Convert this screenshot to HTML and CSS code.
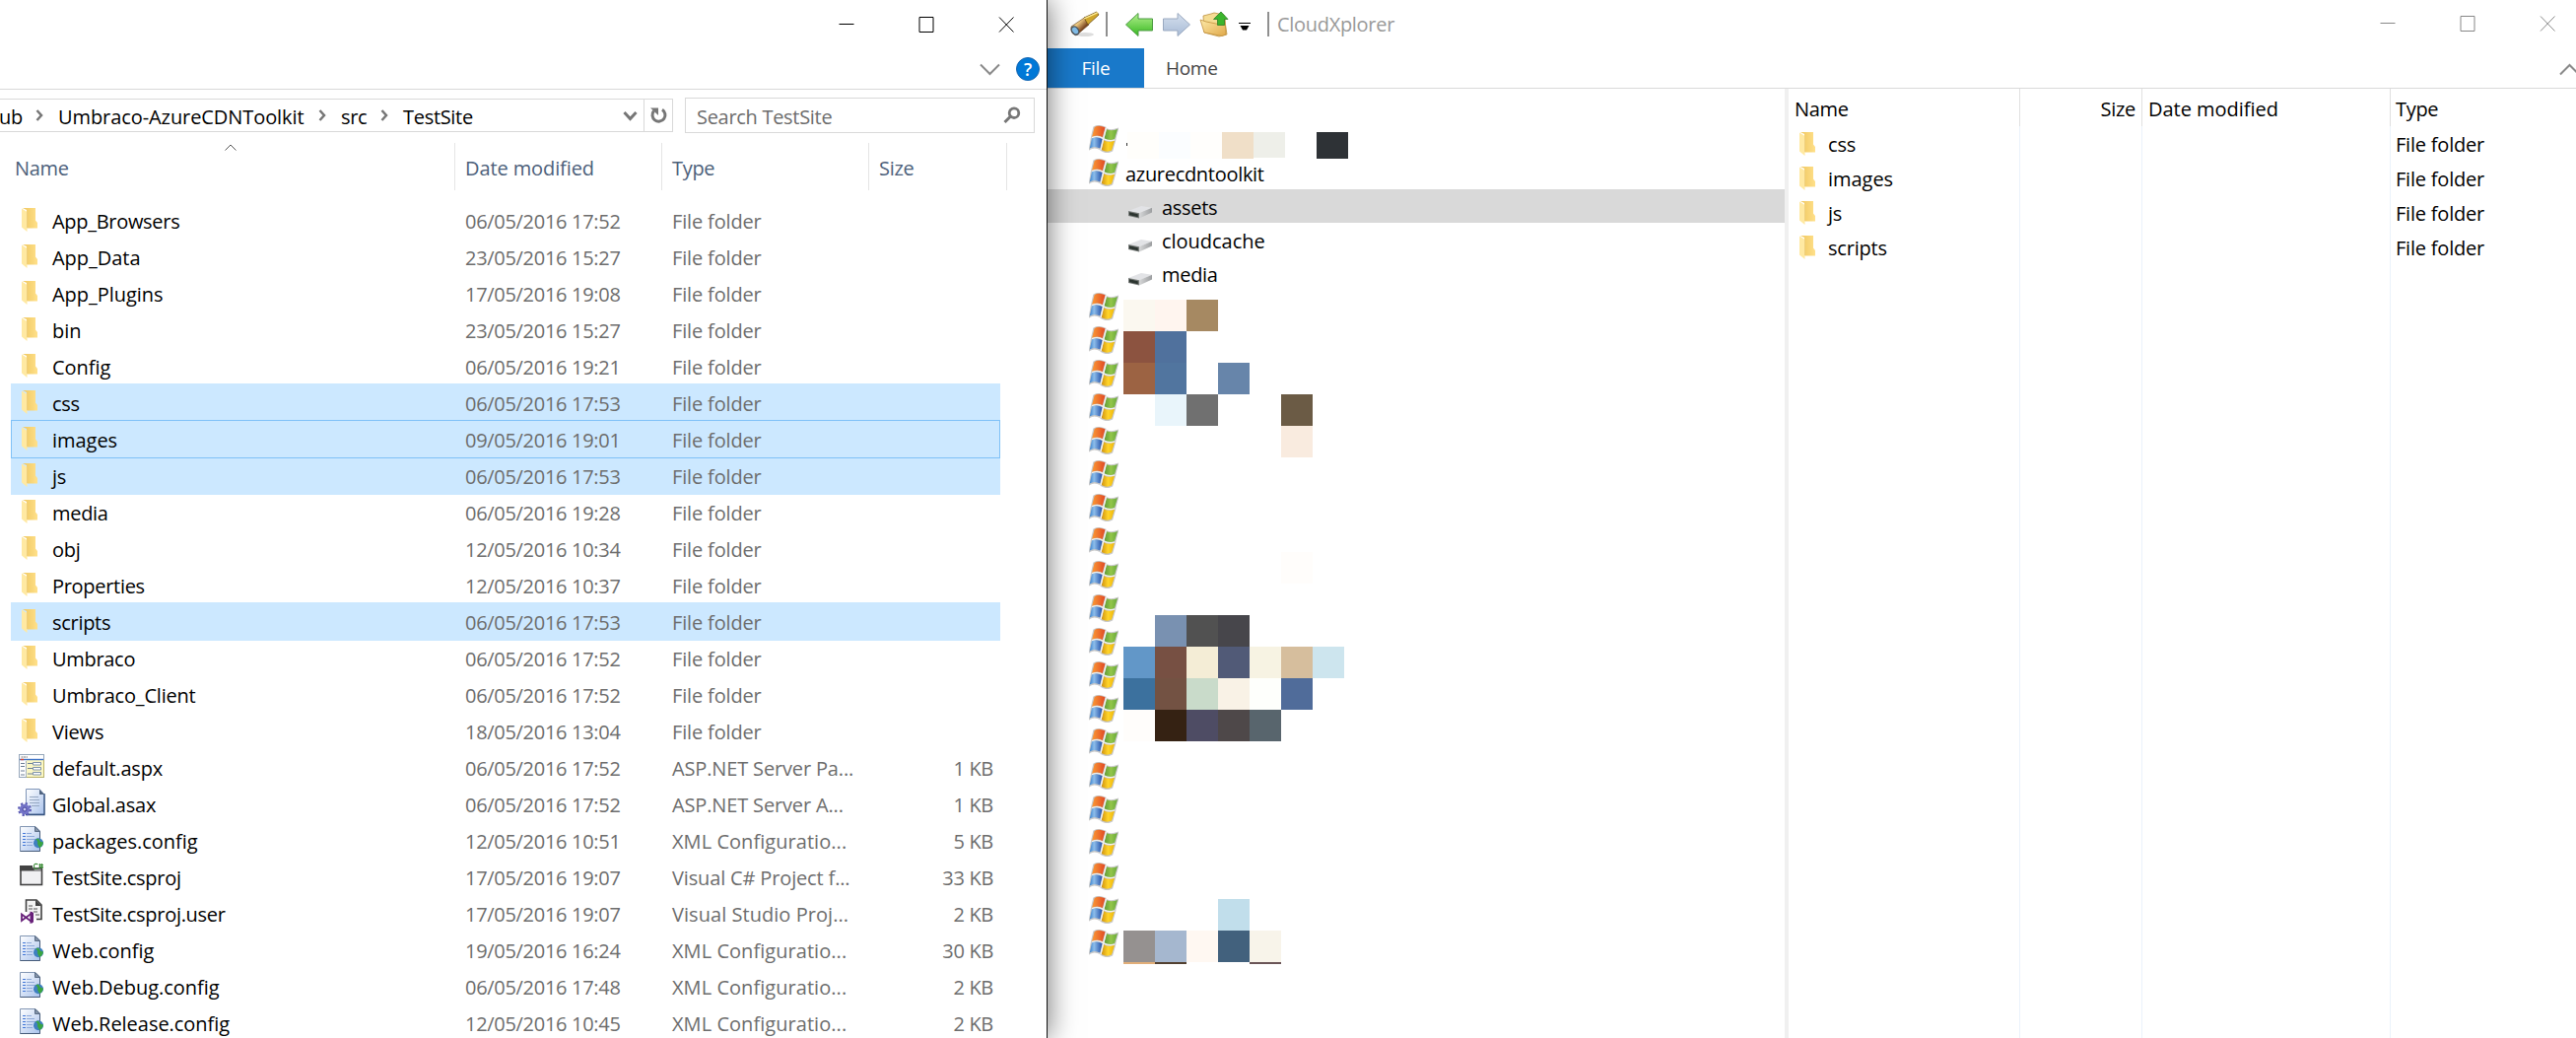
FILE: index.html
```html
<!DOCTYPE html>
<html lang="en">
<head>
<meta charset="utf-8">
<title>TestSite and CloudXplorer</title>
<link rel="stylesheet" href="styles.css">
</head>
<body>
<svg width="0" height="0" class="defs">
  <defs>
    <linearGradient id="gFold" x1="0" x2="1"><stop offset="0" stop-color="#efc75f"/><stop offset="1" stop-color="#ffe08a"/></linearGradient>
    <linearGradient id="gRed" x1="0" x2="1"><stop offset="0" stop-color="#fb9b35"/><stop offset="1" stop-color="#e04a25"/></linearGradient>
    <linearGradient id="gGreen" x1="0" x2="1"><stop offset="0" stop-color="#5f9a35"/><stop offset=".5" stop-color="#93c64a"/><stop offset="1" stop-color="#68a93a"/></linearGradient>
    <linearGradient id="gBlue" x1="0" x2="1"><stop offset="0" stop-color="#3a83cf"/><stop offset=".35" stop-color="#8dbdea"/><stop offset="1" stop-color="#2350a8"/></linearGradient>
    <linearGradient id="gYellow" x1="0" x2="1"><stop offset="0" stop-color="#cf9110"/><stop offset=".5" stop-color="#ffd42a"/><stop offset="1" stop-color="#eeb70a"/></linearGradient>
    <linearGradient id="gSide" x1="0" x2="1"><stop offset="0" stop-color="#d6d7d8"/><stop offset="1" stop-color="#9c9ea0"/></linearGradient>
    <linearGradient id="gPage" x1="0" y1="0" x2="1" y2="1"><stop offset="0" stop-color="#fff"/><stop offset="1" stop-color="#a9c2ec"/></linearGradient>
    <linearGradient id="gBack" x1="0" x2="0" y1="0" y2="1"><stop offset="0" stop-color="#b4f08f"/><stop offset="1" stop-color="#35b81f"/></linearGradient>
    <linearGradient id="gFwd" x1="0" x2="0" y1="0" y2="1"><stop offset="0" stop-color="#d6e0ee"/><stop offset="1" stop-color="#a8bbd6"/></linearGradient>
    <linearGradient id="gUp" x1="0" x2="1" y1="0" y2="1"><stop offset="0" stop-color="#fdeaa9"/><stop offset="1" stop-color="#e0a94a"/></linearGradient>
    <linearGradient id="gBrass" x1="0" x2="1" y1="0" y2="1"><stop offset="0" stop-color="#a8752c"/><stop offset=".35" stop-color="#f3cf86"/><stop offset=".65" stop-color="#7a4520"/><stop offset="1" stop-color="#4a2a12"/></linearGradient>
    <symbol id="folder" viewBox="0 0 17 24">
      <path d="M1 0H14V12.5L16 15V20.5H5V2z" fill="url(#gFold)"/>
      <path d="M0 0.5L5.5 4V24L0 19.5z" fill="#ffe9a2"/>
      <path d="M5.5 4V20" stroke="#eac878" stroke-width=".7"/>
    </symbol>
    <symbol id="flag" viewBox="0 0 30 28">
      <path d="M5 2Q10-1 17 2.500L14 13Q8 9.500 2.500 13zM18 4Q23 6 29.500 3.500L26.500 14.500Q20 17 14.800 13.700zM2.500 13Q8 10.500 14 14L12 24.500Q5 21 .5 24.500zM14.500 15Q20 17.500 26.500 15.500L23.500 26Q18 29 12.300 25.500z" fill="#b9b9b9" stroke="#c9c9c9" stroke-width="1.400"/>
      <path d="M5.700 2Q10-.8 16.500 2.300L13.800 12Q8 9 3 12z" fill="url(#gRed)"/>
      <path d="M18 4.300Q23 6.500 29 4L26 14Q20 16.500 15.500 13.500z" fill="url(#gGreen)"/>
      <path d="M3 13.200Q8 11 13.500 14L11.300 23.500Q5 20.500 .8 23.500z" fill="url(#gBlue)"/>
      <path d="M15 15.200Q20 18 26 15.800L23 25.500Q18 28 12.700 25z" fill="url(#gYellow)"/>
      <path d="M3 12.600Q9 10 14.500 13.500T26.300 15M17.500 2.500L12 25" fill="none" stroke="#f3f3f0" stroke-width="1.200"/>
    </symbol>
    <symbol id="drive" viewBox="0 0 24 13">
      <path d="M0 5L13 0L24 1.800L11 7.500z" fill="#e2e3e6"/>
      <path d="M11 7.300L24 1.800V6.500L11 12.500z" fill="url(#gSide)"/>
      <path d="M0 5L11 7.300V12.500L0 10z" fill="#777b79"/>
      <path d="M1 6.300L9.800 8.300V11.300L1 9.300z" fill="#2c3530"/>
    </symbol>
    <symbol id="aspx" viewBox="0 0 26 24">
      <rect x=".5" y=".5" width="25" height="23" fill="#fff" stroke="#96a7bb"/>
      <rect x="8" y="6" width="17" height="17" fill="#fbf7c4"/>
      <path d="M25.500 6V23.500H8" fill="none" stroke="#b9b26a"/>
      <path d="M2.500 3H9" stroke="#777" stroke-dasharray="2 .6"/>
      <path d="M1 5.500H25" stroke="#3d72c4" stroke-width="1.400"/><path d="M2 5.500H5" stroke="#e3432e" stroke-width="1.400"/>
      <path d="M2 9.500H6M2 12.500H6M2 17H6M2 21H6M9 9.500H14M9 14.500H14M9 20H14" stroke="#6c7f96"/>
      <path d="M14.500 8.500H22.500V11H14.500zM14.500 13.500H22.500V16H14.500zM14.500 18.500H22.500V21H14.500z" fill="#fff" stroke="#7f93a8"/>
      <path d="M7.500 7V23" stroke="#a5b3c2"/>
    </symbol>
    <symbol id="asax" viewBox="0 0 28 28">
      <path d="M8.500 .5H22L27 6V26H8.500z" fill="url(#gPage)" stroke="#7f95b8"/>
      <path d="M27 5V26.500H8" fill="none" stroke="#33517f" stroke-width="1.300"/>
      <path d="M22 .5V6H27z" fill="#506480"/>
      <path d="M12 8.500H21M12 11.500H22M12 14.500H22M14 17.500H22" stroke="#96a8c2"/>
      <circle cx="7" cy="21" r="5.200" fill="#7474c8"/><circle cx="7" cy="21" r="6" fill="none" stroke="#5a5ab4" stroke-width="2" stroke-dasharray="2.300 2.400"/>
      <circle cx="7" cy="21" r="2" fill="#c9c9f3" stroke="#44449b"/>
    </symbol>
    <symbol id="config" viewBox="0 0 24 26">
      <path d="M.5 .5H16L20.500 5V25.500H.5z" fill="url(#gPage)" stroke="#8296b3"/>
      <path d="M20.500 5V25.500H.5" fill="none" stroke="#465b79"/>
      <path d="M15.500 .5V5.500H20.500z" fill="#8493a8" stroke="#5b6d86"/>
      <path d="M3 7.500H6M3 10.500H6M3 13.500H6M3 16.500H6M3 19.500H6" stroke="#4177d8" stroke-width="1.200"/>
      <path d="M7 7.500H12M7 10.500H15M7 13.500H16M7 16.500H13M7 19.500H13" stroke="#8ea9d8"/>
      <circle cx="19" cy="17.300" r="5" fill="#3f7fc0"/>
      <path d="M16 13.500Q19 15 18 18L20 22Q24 20 23.800 16Q22 17 20.500 15L19 12.500z" fill="#3aa541"/>
    </symbol>
    <symbol id="csproj" viewBox="0 0 25 24">
      <rect x="1" y="6" width="21.500" height="16.500" fill="#f0f0f2" stroke="#424242" stroke-width="1.600"/>
      <path d="M0 3H13V5.500L15 7.500H23V8.500H0z" fill="#424242"/>
      <path d="M18.500 1.800Q14.500 .4 14.500 3.800T18.500 6M20.500 1V6M22.500 1V6M19.500 2.500H24M19.500 4.600H24" fill="none" stroke="#388a34" stroke-width="1.100"/>
    </symbol>
    <symbol id="csuser" viewBox="0 0 23 25">
      <path d="M5.500 13V1H16L21 6V20.500H16" fill="#f4f4f4" stroke="#424242" stroke-width="1.600"/>
      <path d="M15 1V7H21z" fill="#424242"/>
      <path d="M8 7H13M8 10H18M13 13H18M15 16H19" stroke="#555" stroke-dasharray="4 1"/>
      <path d="M1 15.500L11 23V14.500L1 22z" fill="#fff" stroke="#68217a" stroke-width="1.800"/>
      <path d="M9.500 12.500L13 14V23.500L9.500 25z" fill="#68217a"/>
    </symbol>
    <symbol id="winbtns" viewBox="0 0 177 16">
      <path d="M0 7.500H15M81.500 .5H95.500V15.500H81.500zM162.500 .5L177 15.500M177 .5L162.500 15.500" fill="none" stroke="currentColor"/>
    </symbol>
  </defs>
</svg>
<div class="desktop">
  <section class="explorer">
    <header class="titlebar"><svg class="winbtns" width="178" height="16"><use href="#winbtns"/></svg></header>
    <div class="ribbon">
      <svg width="21" height="13" viewBox="0 0 21 13"><path d="M1 1.500L10.500 11L20 1.500" fill="none" stroke="#8a8a8a" stroke-width="2"/></svg>
      <span class="help">?</span>
    </div>
    <div class="nav">
      <div class="address">
        <span class="crumb c1">ub</span><svg class="sep" width="8" height="12" viewBox="0 0 8 12"><path d="M1.500 1L6 6L1.500 11" fill="none" stroke="#767676" stroke-width="2.500"/></svg>
        <span class="crumb c2">Umbraco-AzureCDNToolkit</span><svg class="sep" width="8" height="12" viewBox="0 0 8 12"><path d="M1.500 1L6 6L1.500 11" fill="none" stroke="#767676" stroke-width="2.500"/></svg>
        <span class="crumb c3">src</span><svg class="sep" width="8" height="12" viewBox="0 0 8 12"><path d="M1.500 1L6 6L1.500 11" fill="none" stroke="#767676" stroke-width="2.500"/></svg>
        <span class="crumb c4">TestSite</span>
        <svg class="drop" width="15" height="11" viewBox="0 0 15 11"><path d="M1.500 2L7.500 8.500L13.500 2" fill="none" stroke="#767676" stroke-width="3"/></svg>
        <span class="refresh"><svg width="17" height="18" viewBox="0 0 17 18"><path d="M3.500 4.500A6.500 6.500 0 1 0 12 3.200" fill="none" stroke="#767676" stroke-width="3"/><path d="M0 1.500H8V9z" fill="#767676"/></svg></span>
      </div>
      <div class="search"><span>Search TestSite</span>
        <svg width="18" height="18" viewBox="0 0 18 18"><circle cx="11" cy="6.700" r="4.800" fill="none" stroke="#767676" stroke-width="2.800"/><path d="M7.500 10L1.500 16" stroke="#767676" stroke-width="3"/></svg></div>
    </div>
    <div class="cols"><span class="h1">Name<svg class="sort" width="12" height="7" viewBox="0 0 12 7"><path d="M.5 6.500L6 1L11.500 6.500" fill="none" stroke="#555"/></svg></span><span class="h2">Date modified</span><span class="h3">Type</span><span class="h4">Size</span></div>
    <div class="files">
      <div class="row"><svg class="fo"><use href="#folder"/></svg><b>App_Browsers</b><i>06/05/2016 17:52</i><i class="t">File folder</i></div>
      <div class="row"><svg class="fo"><use href="#folder"/></svg><b class="w">App_Data</b><i>23/05/2016 15:27</i><i class="t">File folder</i></div>
      <div class="row"><svg class="fo"><use href="#folder"/></svg><b class="w">App_Plugins</b><i>17/05/2016 19:08</i><i class="t">File folder</i></div>
      <div class="row"><svg class="fo"><use href="#folder"/></svg><b class="w">bin</b><i>23/05/2016 15:27</i><i class="t">File folder</i></div>
      <div class="row"><svg class="fo"><use href="#folder"/></svg><b class="w">Config</b><i>06/05/2016 19:21</i><i class="t">File folder</i></div>
      <div class="row sel"><svg class="fo"><use href="#folder"/></svg><b>css</b><i>06/05/2016 17:53</i><i class="t">File folder</i></div>
      <div class="row sel focus"><svg class="fo"><use href="#folder"/></svg><b class="w">images</b><i>09/05/2016 19:01</i><i class="t">File folder</i></div>
      <div class="row sel"><svg class="fo"><use href="#folder"/></svg><b>js</b><i>06/05/2016 17:53</i><i class="t">File folder</i></div>
      <div class="row"><svg class="fo"><use href="#folder"/></svg><b>media</b><i>06/05/2016 19:28</i><i class="t">File folder</i></div>
      <div class="row"><svg class="fo"><use href="#folder"/></svg><b>obj</b><i>12/05/2016 10:34</i><i class="t">File folder</i></div>
      <div class="row"><svg class="fo"><use href="#folder"/></svg><b>Properties</b><i>12/05/2016 10:37</i><i class="t">File folder</i></div>
      <div class="row sel"><svg class="fo"><use href="#folder"/></svg><b>scripts</b><i>06/05/2016 17:53</i><i class="t">File folder</i></div>
      <div class="row"><svg class="fo"><use href="#folder"/></svg><b>Umbraco</b><i>06/05/2016 17:52</i><i class="t">File folder</i></div>
      <div class="row"><svg class="fo"><use href="#folder"/></svg><b class="m">Umbraco_Client</b><i>06/05/2016 17:52</i><i class="t">File folder</i></div>
      <div class="row"><svg class="fo"><use href="#folder"/></svg><b class="m">Views</b><i>18/05/2016 13:04</i><i class="t">File folder</i></div>
      <div class="row"><svg class="ax"><use href="#aspx"/></svg><b class="m">default.aspx</b><i>06/05/2016 17:52</i><i class="t">ASP.NET Server Pa...</i><i class="s">1 KB</i></div>
      <div class="row"><svg class="as"><use href="#asax"/></svg><b class="m">Global.asax</b><i>06/05/2016 17:52</i><i class="t">ASP.NET Server A...</i><i class="s">1 KB</i></div>
      <div class="row"><svg class="cf"><use href="#config"/></svg><b class="w">packages.config</b><i>12/05/2016 10:51</i><i class="t x">XML Configuratio...</i><i class="s">5 KB</i></div>
      <div class="row"><svg class="cp"><use href="#csproj"/></svg><b>TestSite.csproj</b><i>17/05/2016 19:07</i><i class="t">Visual C# Project f...</i><i class="s">33 KB</i></div>
      <div class="row"><svg class="cu"><use href="#csuser"/></svg><b>TestSite.csproj.user</b><i>17/05/2016 19:07</i><i class="t x">Visual Studio Proj...</i><i class="s">2 KB</i></div>
      <div class="row"><svg class="cf"><use href="#config"/></svg><b class="w">Web.config</b><i>19/05/2016 16:24</i><i class="t x">XML Configuratio...</i><i class="s">30 KB</i></div>
      <div class="row"><svg class="cf"><use href="#config"/></svg><b class="w">Web.Debug.config</b><i>06/05/2016 17:48</i><i class="t x">XML Configuratio...</i><i class="s">2 KB</i></div>
      <div class="row"><svg class="cf"><use href="#config"/></svg><b class="w">Web.Release.config</b><i>12/05/2016 10:45</i><i class="t x">XML Configuratio...</i><i class="s">2 KB</i></div>
    </div>
  </section>
  <section class="cloud">
    <header class="cbar">
      <svg width="196" height="30" viewBox="1084 10 196 30">
        <ellipse cx="1101" cy="35" rx="9" ry="2" fill="#ddd"/>
        <path d="M1087 27L1101 17.500L1105 25L1092 36Q1086 34 1087 27z" fill="url(#gBrass)" stroke="#60401f" stroke-width=".6"/>
        <path d="M1100 18L1113 12L1115 15L1104 25z" fill="#d0a62c" stroke="#6b4c16" stroke-width=".8"/>
        <path d="M1100 19L1114 12.700" stroke="#ffef9b" stroke-width="1.300"/>
        <ellipse cx="1091" cy="31" rx="3.300" ry="4.500" transform="rotate(-35 1091 31)" fill="#82bde8" stroke="#4c555d" stroke-width="1.400"/>
        <path d="M1123 12V37" stroke="#8f8f8f" stroke-width="2"/>
        <path d="M1142.500 25L1155 13.500V19H1169.500V31H1155V36.500z" fill="url(#gBack)" stroke="#4d9a43"/>
        <path d="M1207.500 25L1195 13.500V19H1180.500V31H1195V36.500z" fill="url(#gFwd)" stroke="#9aa9c0"/>
        <path d="M1221 16L1229 14L1232 13L1242 15L1245 35L1237 37L1222 33z" fill="#f5dc93" stroke="#bd9040" stroke-width=".8"/>
        <path d="M1218 20L1224 22L1234 24Q1240 26 1243 20L1244 35L1240 36.500L1222 33z" fill="url(#gUp)" stroke="#c3913c" stroke-width=".8"/>
        <path d="M1239 12L1246 19.500H1242.500V25.500H1235.500V19.500H1231.500z" fill="#3bb52d" stroke="#2a7d24" stroke-width=".8"/>
        <path d="M1257 23.500H1269" stroke="#000"/><path d="M1258.500 26H1267.500L1265 30.500H1261z" fill="#000"/>
      </svg>
      <span class="ctitle">CloudXplorer</span>
      <svg class="winbtns" width="178" height="16"><use href="#winbtns"/></svg>
    </header>
    <div class="tabs"><span class="file">File</span><span class="home">Home</span>
      <svg width="17" height="13" viewBox="0 0 17 13"><path d="M1 11.500L10.500 2L20 11.500" fill="none" stroke="#8a8a8a" stroke-width="2"/></svg></div>
    <div class="panes">
      <div class="tree">
        <div class="node"><svg><use href="#flag"/></svg></div>
        <div class="node"><svg><use href="#flag"/></svg>azurecdntoolkit</div>
        <div class="leaf on"><svg><use href="#drive"/></svg>assets</div>
        <div class="leaf"><svg><use href="#drive"/></svg><span class="w">cloudcache</span></div>
        <div class="leaf"><svg><use href="#drive"/></svg>media</div>
        <div class="node"><svg><use href="#flag"/></svg></div><div class="node"><svg><use href="#flag"/></svg></div>
        <div class="node"><svg><use href="#flag"/></svg></div><div class="node"><svg><use href="#flag"/></svg></div>
        <div class="node"><svg><use href="#flag"/></svg></div><div class="node"><svg><use href="#flag"/></svg></div>
        <div class="node"><svg><use href="#flag"/></svg></div><div class="node"><svg><use href="#flag"/></svg></div>
        <div class="node"><svg><use href="#flag"/></svg></div><div class="node"><svg><use href="#flag"/></svg></div>
        <div class="node"><svg><use href="#flag"/></svg></div><div class="node"><svg><use href="#flag"/></svg></div>
        <div class="node"><svg><use href="#flag"/></svg></div><div class="node"><svg><use href="#flag"/></svg></div>
        <div class="node"><svg><use href="#flag"/></svg></div><div class="node"><svg><use href="#flag"/></svg></div>
        <div class="node"><svg><use href="#flag"/></svg></div><div class="node"><svg><use href="#flag"/></svg></div>
        <div class="node"><svg><use href="#flag"/></svg></div><div class="node"><svg><use href="#flag"/></svg></div>
        <svg class="mosaic" width="232" height="850" viewBox="1140 130 232 850" shape-rendering="crispEdges">
          <path d="M1143 145h1v3h-1z" fill="#333"/>
          <path d="M1144 134h32v27h-32z" fill="#fffefb"/><path d="M1176 134h32v27h-32z" fill="#fbfdff"/><path d="M1208 134h32v27h-32z" fill="#fffefc"/>
          <path d="M1240 134h32v27h-32z" fill="#f0dfc8"/><path d="M1272 134h32v26h-32z" fill="#eeefe9"/><path d="M1336 134h32v27h-32z" fill="#2e3236"/>
          <path d="M1140 304h32v32h-32z" fill="#fbf8f0"/><path d="M1172 304h32v32h-32z" fill="#fff5ef"/><path d="M1204 304h32v32h-32z" fill="#a68962"/>
          <path d="M1140 336h32v32h-32z" fill="#8c5340"/><path d="M1172 336h32v32h-32z" fill="#50719d"/>
          <path d="M1140 368h32v32h-32z" fill="#9c6343"/><path d="M1172 368h32v32h-32z" fill="#51759f"/><path d="M1236 368h32v32h-32z" fill="#6785aa"/>
          <path d="M1172 400h32v32h-32z" fill="#e9f5fb"/><path d="M1204 400h32v32h-32z" fill="#707070"/><path d="M1300 400h32v32h-32z" fill="#6b5b45"/>
          <path d="M1300 432h32v32h-32z" fill="#f9ebdf"/><path d="M1300 560h32v32h-32z" fill="#fffdfb"/>
          <path d="M1172 624h32v32h-32z" fill="#7991b1"/><path d="M1204 624h32v32h-32z" fill="#515151"/><path d="M1236 624h32v32h-32z" fill="#47464b"/>
          <path d="M1140 656h32v32h-32z" fill="#6297c8"/><path d="M1172 656h32v32h-32z" fill="#775043"/><path d="M1204 656h32v32h-32z" fill="#f4edd6"/><path d="M1236 656h32v32h-32z" fill="#515a77"/><path d="M1268 656h32v32h-32z" fill="#f7f3e3"/><path d="M1300 656h32v32h-32z" fill="#d6be9d"/><path d="M1332 656h32v32h-32z" fill="#cde5ee"/>
          <path d="M1140 688h32v32h-32z" fill="#3c719e"/><path d="M1172 688h32v32h-32z" fill="#735243"/><path d="M1204 688h32v32h-32z" fill="#c9dbca"/><path d="M1236 688h32v32h-32z" fill="#f9f2e6"/><path d="M1268 688h32v32h-32z" fill="#fefffc"/><path d="M1300 688h32v32h-32z" fill="#506c9a"/>
          <path d="M1140 720h32v32h-32z" fill="#fffdfb"/><path d="M1172 720h32v32h-32z" fill="#352213"/><path d="M1204 720h32v32h-32z" fill="#4e4c64"/><path d="M1236 720h32v32h-32z" fill="#4e4849"/><path d="M1268 720h32v32h-32z" fill="#58656d"/>
          <path d="M1236 912h32v32h-32z" fill="#c1deeb"/>
          <path d="M1140 944h32v32h-32z" fill="#959190"/><path d="M1172 944h32v32h-32z" fill="#a5b7cf"/><path d="M1204 944h32v32h-32z" fill="#fff8f2"/><path d="M1236 944h32v32h-32z" fill="#42617d"/><path d="M1268 944h32v32h-32z" fill="#f8f4ea"/>
          <path d="M1140 976h32v2h-32z" fill="#e1ae79"/><path d="M1172 976h32v2h-32z" fill="#524030"/><path d="M1268 976h32v2h-32z" fill="#6a5557"/>
        </svg>
      </div>
      <div class="list">
        <div class="lcol n"><div class="lh">Name</div>
          <div class="li"><svg><use href="#folder"/></svg>css</div><div class="li"><svg><use href="#folder"/></svg><span class="w">images</span></div><div class="li"><svg><use href="#folder"/></svg>js</div><div class="li"><svg><use href="#folder"/></svg>scripts</div></div>
        <div class="lcol z"><div class="lh">Size</div></div>
        <div class="lcol d"><div class="lh w">Date modified</div></div>
        <div class="lcol y"><div class="lh">Type</div><div class="li">File folder</div><div class="li">File folder</div><div class="li">File folder</div><div class="li">File folder</div></div>
      </div>
    </div>
  </section>
</div>
</body>
</html>
```
FILE: styles.css
```css
* { box-sizing: border-box; }
body { margin: 0; background: #fff; font-family: "Open Sans", "Noto Sans", sans-serif; font-size: 20px; letter-spacing: -0.3px; line-height: 28px; color: #000; overflow: hidden; white-space: nowrap; }
svg { display: block; flex: none; }
.defs { position: absolute; }
.desktop { display: flex; width: 2614px; height: 1053px; overflow: hidden; }

.w { letter-spacing: -0.03px; }
.m { letter-spacing: -0.2px; }

/* File Explorer window */
.explorer { position: relative; z-index: 1; flex: none; width: 1063px; height: 1053px; background: #fff; border-right: 1px solid #111; box-shadow: 2px 0 26px rgba(0, 0, 0, .5); }
.titlebar { display: flex; justify-content: flex-end; height: 50px; padding: 17px 33px 0 0; }
.ribbon { display: flex; justify-content: flex-end; align-items: center; gap: 16px; height: 41px; padding-right: 7px; border-bottom: 1px solid #d9d9d9; }
.help { width: 24px; height: 24px; border-radius: 50%; background: #0078d7; border: 1px solid #1565b0; color: #fff; font-weight: 600; font-size: 18px; line-height: 22px; text-align: center; letter-spacing: 0; }
.nav { display: flex; gap: 12px; height: 54px; padding-top: 8px; }
.address { display: flex; align-items: center; width: 683px; height: 34px; margin-top: 1px; border: 1px solid #d9d9d9; border-left: 0; }
.crumb { display: block; padding-top: 3px; }
.c1 { width: 37px; margin-left: -1px; }
.c2 { width: 264px; margin-left: 15px; letter-spacing: -0.08px; }
.c3 { width: 40px; margin-left: 15px; }
.c4 { margin-left: 15px; }
.drop { margin-left: auto; margin-right: 6px; }
.refresh { display: flex; align-items: center; justify-content: center; width: 29px; height: 32px; border-left: 1px solid #d9d9d9; }
.search { display: flex; align-items: center; justify-content: space-between; width: 355px; height: 36px; padding: 0 13px 0 11px; border: 1px solid #d9d9d9; color: #6d6d6d; }
.search span { padding-top: 3px; }
.cols { display: flex; height: 48px; line-height: 52px; color: #4c607a; }
.cols span { border-right: 1px solid #e5e5e5; padding-left: 10px; }
.cols .h1 { position: relative; width: 462px; padding-left: 15px; }
.sort { position: absolute; left: 228px; top: 1px; }
.h2 { width: 210px; letter-spacing: -0.1px; }
.h3 { width: 210px; }
.h4 { width: 140px; }
.files { padding: 11px 0 0 11px; }
.row { display: grid; grid-template-columns: 42px 419px 210px 206px 120px; width: 1004px; height: 39px; margin-bottom: -2px; line-height: 41px; }
.row b, .row i { font-weight: 400; font-style: normal; }
.row i { color: #6d6d6d; }
.row .t { letter-spacing: -0.15px; }
.row .x { letter-spacing: 0.05px; }
.row .s { text-align: right; }
.sel { background: #cce8ff; }
.focus { position: relative; border: 1px solid #7fc1f7; }
.focus svg { translate: -1px -1px; }
.focus b, .focus i { translate: -1px -1px; }
.fo { width: 17px; height: 24px; margin: 7px 0 0 11px; }
.ax { width: 26px; height: 24px; margin: 6px 0 0 8px; }
.as { width: 28px; height: 28px; margin: 4px 0 0 7px; }
.cf { width: 24px; height: 26px; margin: 5px 0 0 9px; }
.cp { width: 25px; height: 24px; margin: 5px 0 0 9px; }
.cu { width: 23px; height: 25px; margin: 5px 0 0 10px; }

/* CloudXplorer window */
.cloud { flex: none; width: 1551px; height: 1053px; }
.cbar { display: flex; align-items: flex-start; height: 49px; padding: 10px 21px 0 21px; }
.ctitle { margin-left: 6px; padding-left: 8px; border-left: 2px solid #8f8f8f; line-height: 25px; margin-top: 2px; color: #999; }
.cbar .winbtns { margin: 6px 0 0 auto; color: #888; }
.tabs { display: flex; height: 41px; border-bottom: 1px solid #d9d9d9; line-height: 40px; font-size: 19px; }
.file { width: 98px; background: #1979ca; color: #fff; text-align: center; }
.home { padding-left: 22px; color: #444; }
.tabs svg { margin: 15px 0 0 auto; }
.panes { display: flex; height: 963px; }
.tree { position: relative; width: 752px; padding-top: 34px; border-right: 4px solid #f0f0f0; }
.node, .leaf { display: flex; height: 34px; line-height: 37px; }
.node svg { width: 30px; height: 28px; margin: 3px 7px 0 42px; }
.leaf svg { width: 24px; height: 13px; margin: 17px 10px 0 82px; }
.on { background: #d9d9d9; }
.tree .mosaic { position: absolute; left: 77px; top: 40px; }
.list { display: flex; height: 963px; }
.lcol { border-right: 1px solid #eaf2fb; }
.lh { height: 38px; line-height: 42px; margin-right: -1px; border-right: 1px solid #e0e0e0; padding-left: 6px; }
.n { width: 235px; }
.z { width: 124px; text-align: right; }
.z .lh { padding-right: 6px; }
.d { width: 252px; }
.y { width: 188px; border: 0; }
.y .lh { border: 0; padding-left: 5px; }
.li { display: flex; height: 35px; line-height: 38px; padding-left: 5px; letter-spacing: -0.2px; }
.n .li { padding-left: 11px; }
.li svg { width: 17px; height: 24px; margin: 6px 12px 0 0; }
```
